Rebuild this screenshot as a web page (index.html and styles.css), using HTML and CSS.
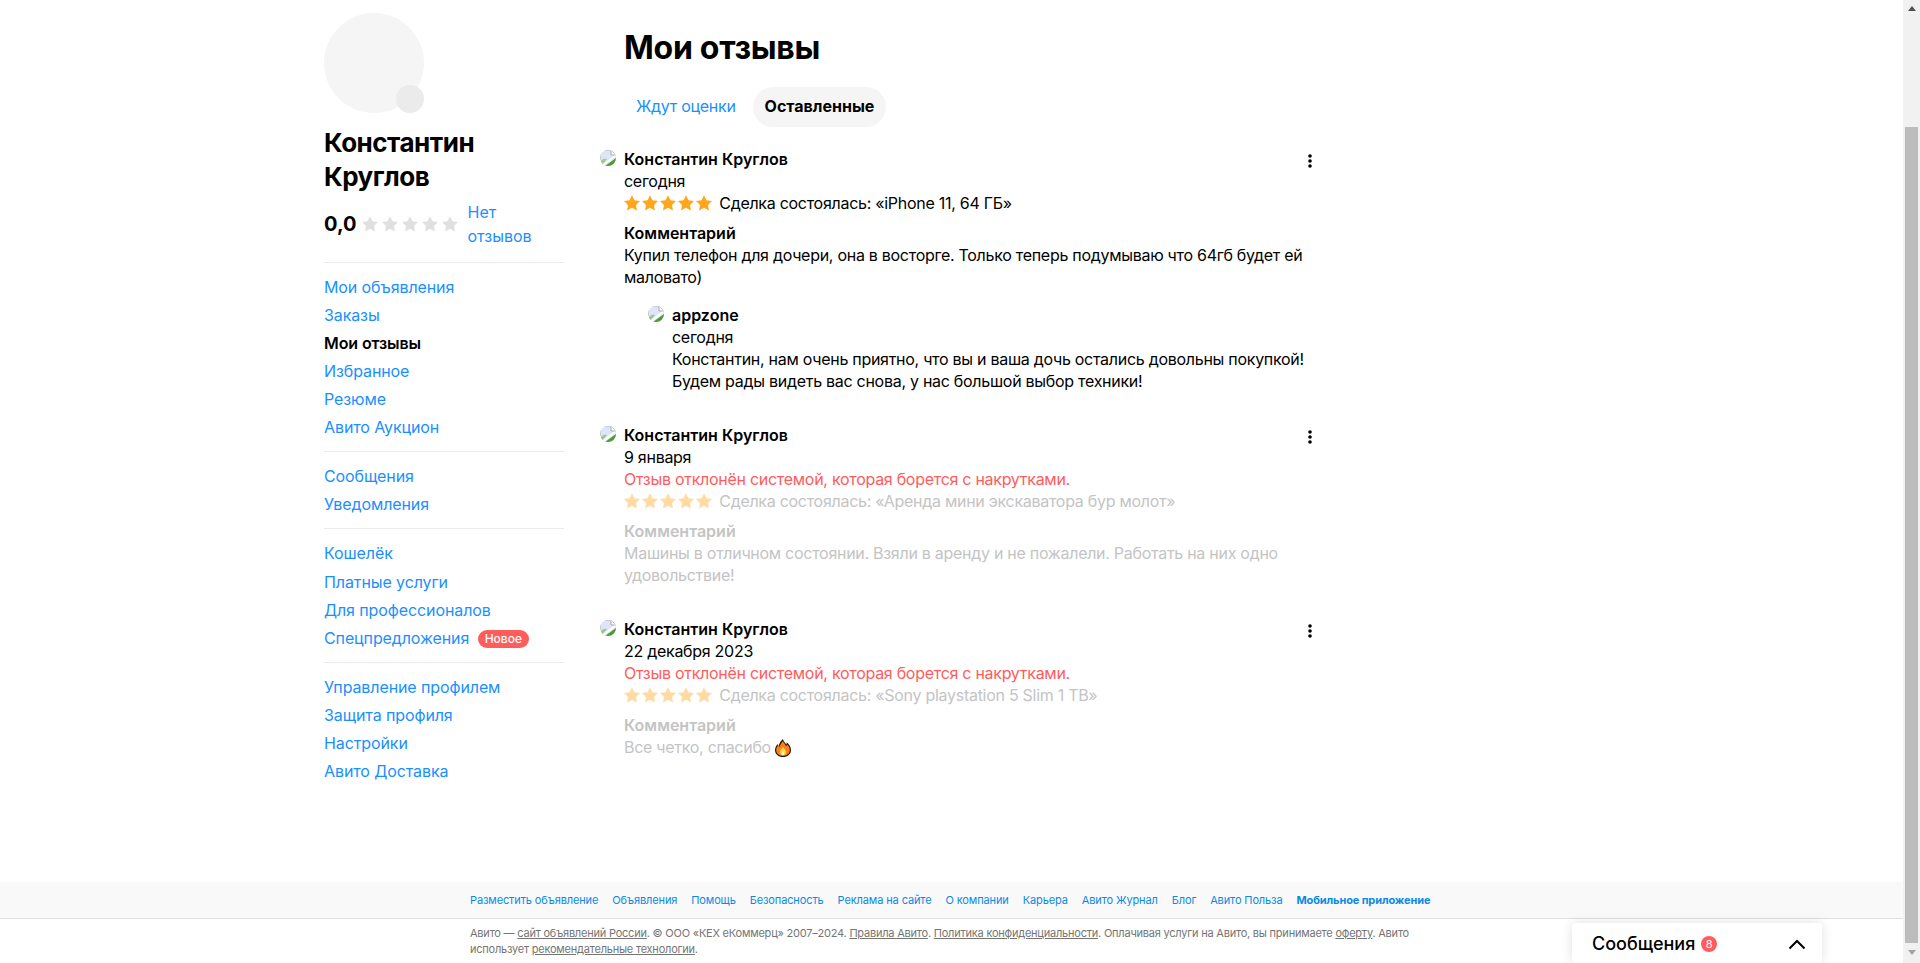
FILE: index.html
```html
<!DOCTYPE html>
<html lang="ru">

<head>
  <meta charset="UTF-8">
  <title>Мои отзывы</title>
  <link rel="stylesheet" href="styles.css">
</head>

<body>
  <svg class="defs" width="0" height="0">
    <symbol id="star" viewBox="0 0 16 16">
      <path d="M8 .2l2.45 5 5.55.8-4 3.900.95 5.500L8 12.800l-4.950 2.600L4 9.900 0 6l5.550-.8z" />
    </symbol>
    <symbol id="broken" viewBox="0 0 16 16">
      <path d="M0 0h11l5 5v11H0z" fill="#dce6f8" />
      <path d="M11 0v5h5z" fill="#fff" stroke="#a9a9a9" />
      <path d="M0 0h11M0 0v10" stroke="#a9a9a9" />
      <path d="M0 12c2-3 5-4 7-3l-6 7H0z" fill="#9ccb7c" />
      <path d="M16 8v8H5z" fill="#4f9a34" />
      <path d="M2 16L15 6" stroke="#fff" stroke-width="2" />
    </symbol>
    <symbol id="more" viewBox="0 0 4 16">
      <circle cx="2" cy="3" r="1.800" />
      <circle cx="2" cy="8" r="1.800" />
      <circle cx="2" cy="13" r="1.800" />
    </symbol>
  </svg>

  <div class="page">
    <div class="content">
      <div class="layout">
        <aside class="sidebar">
          <div class="avatar">
            <span class="avatar-edit"></span>
          </div>
          <div class="profile-name">Константин Круглов</div>
          <div class="rating">
            <b class="rating-value">0,0</b>
            <span class="stars stars-empty">
              <svg><use href="#star" /></svg><svg><use href="#star" /></svg><svg><use href="#star" /></svg><svg><use href="#star" /></svg><svg><use href="#star" /></svg>
            </span>
            <a class="rating-link" href="#">Нет отзывов</a>
          </div>

          <nav class="menu">
            <a href="#">Мои объявления</a>
            <a href="#">Заказы</a>
            <a href="#" class="current">Мои отзывы</a>
            <a href="#">Избранное</a>
            <a href="#">Резюме</a>
            <a href="#">Авито Аукцион</a>
          </nav>
          <nav class="menu">
            <a href="#">Сообщения</a>
            <a href="#">Уведомления</a>
          </nav>
          <nav class="menu menu-wallet">
            <a href="#">Кошелёк</a>
            <a href="#">Платные услуги</a>
            <a href="#">Для профессионалов</a>
            <a href="#">Спецпредложения <span class="badge-new">Новое</span></a>
          </nav>
          <nav class="menu">
            <a href="#">Управление профилем</a>
            <a href="#">Защита профиля</a>
            <a href="#">Настройки</a>
            <a href="#">Авито Доставка</a>
          </nav>
        </aside>

        <main class="main">
          <h1>Мои отзывы</h1>
          <div class="tabs">
            <a href="#" class="tab">Ждут оценки</a>
            <a href="#" class="tab tab-active">Оставленные</a>
          </div>

          <article class="review">
            <svg class="review-pic"><use href="#broken" /></svg>
            <svg class="review-more"><use href="#more" /></svg>
            <div class="review-name">Константин Круглов</div>
            <div>сегодня</div>
            <div class="deal">
              <span class="stars stars-full">
                <svg><use href="#star" /></svg><svg><use href="#star" /></svg><svg><use href="#star" /></svg><svg><use href="#star" /></svg><svg><use href="#star" /></svg>
              </span>
              Сделка состоялась: «iPhone 11, 64 ГБ»
            </div>
            <div class="review-title">Комментарий</div>
            <div>Купил телефон для дочери, она в восторге. Только теперь подумываю что 64гб будет ей маловато)</div>
            <div class="answer">
              <svg class="review-pic"><use href="#broken" /></svg>
              <div class="review-name">appzone</div>
              <div>сегодня</div>
              <div>Константин, нам очень приятно, что вы и ваша дочь остались довольны покупкой! Будем рады видеть вас снова, у нас большой выбор техники!</div>
            </div>
          </article>

          <article class="review review-rejected">
            <svg class="review-pic"><use href="#broken" /></svg>
            <svg class="review-more"><use href="#more" /></svg>
            <div class="review-name">Константин Круглов</div>
            <div>9 января</div>
            <div class="reject-note">Отзыв отклонён системой, которая борется с накрутками.</div>
            <div class="deal">
              <span class="stars stars-full">
                <svg><use href="#star" /></svg><svg><use href="#star" /></svg><svg><use href="#star" /></svg><svg><use href="#star" /></svg><svg><use href="#star" /></svg>
              </span>
              Сделка состоялась: «Аренда мини экскаватора бур молот»
            </div>
            <div class="review-title">Комментарий</div>
            <div class="faded">Машины в отличном состоянии. Взяли в аренду и не пожалели. Работать на них одно удовольствие!</div>
          </article>

          <article class="review review-rejected">
            <svg class="review-pic"><use href="#broken" /></svg>
            <svg class="review-more"><use href="#more" /></svg>
            <div class="review-name">Константин Круглов</div>
            <div>22 декабря 2023</div>
            <div class="reject-note">Отзыв отклонён системой, которая борется с накрутками.</div>
            <div class="deal">
              <span class="stars stars-full">
                <svg><use href="#star" /></svg><svg><use href="#star" /></svg><svg><use href="#star" /></svg><svg><use href="#star" /></svg><svg><use href="#star" /></svg>
              </span>
              Сделка состоялась: «Sony playstation 5 Slim 1 TB»
            </div>
            <div class="review-title">Комментарий</div>
            <div class="faded">Все четко, спасибо
              <svg class="fire" viewBox="0 0 16 18">
                <path d="M8 0c.5 2.800 2.300 3.600 3.200 5.600.5-.8.6-1.500.5-2.300C14 5.200 16 8 16 11c0 4.300-3.400 7-8 7s-8-2.700-8-7c0-2.700 1.500-4.500 2.500-6 .2 1 .6 1.700 1.300 2.200C3.800 4.500 6 2 8 0z" fill="#2b1708" />
                <path d="M8 2c.6 2.300 2.300 3.300 3.300 5.300l.9-1.700C13.800 7 14.800 9 14.800 11c0 3.600-3 5.800-6.800 5.800S1.200 14.600 1.200 11c0-2.200 1-3.500 1.800-4.600.3.700.8 1.100 1.600 1.400C4.800 6 6.500 3.800 8 2z" fill="#f5801c" />
                <path d="M8 8c.6 1.500 3 2.500 3 5 0 2-1.300 3.300-3 3.300S5 15 5 13c0-2.200 2-3.300 3-5z" fill="#ffd84a" />
                <path d="M8 12.500c.4.800 1.300 1.300 1.300 2.300 0 .9-.6 1.500-1.300 1.500s-1.300-.6-1.300-1.500c0-1 .9-1.500 1.300-2.300z" fill="#fff6c8" />
              </svg>
            </div>
          </article>
        </main>
      </div>

      <footer class="footer">
        <div class="footer-links">
          <a href="#">Разместить объявление</a>
          <a href="#">Объявления</a>
          <a href="#">Помощь</a>
          <a href="#">Безопасность</a>
          <a href="#">Реклама на сайте</a>
          <a href="#">О компании</a>
          <a href="#">Карьера</a>
          <a href="#">Авито Журнал</a>
          <a href="#">Блог</a>
          <a href="#">Авито Польза</a>
          <a href="#" class="footer-app">Мобильное приложение</a>
        </div>
        <p class="footer-note">
          Авито — <a href="#">сайт объявлений России</a>. © ООО «КЕХ eКоммерц» 2007–2024. <a href="#">Правила Авито</a>. <a href="#">Политика конфиденциальности</a>. Оплачивая услуги на Авито, вы принимаете <a href="#">оферту</a>. Авито использует <a href="#">рекомендательные технологии</a>.
        </p>
      </footer>

      <div class="messenger">
        <span class="messenger-title">Сообщения</span>
        <span class="messenger-count">8</span>
        <svg class="messenger-arrow" viewBox="0 0 18 11">
          <path d="M1.500 9.500L9 2l7.500 7.500" fill="none" stroke="#000" stroke-width="2" />
        </svg>
      </div>
    </div>

    <div class="scrollbar">
      <span class="scroll-arrow scroll-up"></span>
      <span class="scroll-thumb"></span>
      <span class="scroll-arrow scroll-down"></span>
    </div>
  </div>
</body>

</html>
```

FILE: styles.css
```css
:root {
  --link: #1a8fff;
  --faded: #c4c4c4;
  --red: #ff5c5c;
  --line: #ebebeb;
}

* {
  box-sizing: border-box;
}

html,
body {
  margin: 0;
  height: 100%;
  overflow: hidden;
}

body {
  font-family: Inter, "Noto Sans", sans-serif;
  font-size: 16px;
  line-height: 22px;
  color: #000;
  background-color: #fff;
}

a {
  color: var(--link);
  text-decoration: none;
}

.defs {
  display: block;
  height: 0;
}

.page {
  display: flex;
  height: 963px;
}

.content {
  position: relative;
  display: flex;
  flex-direction: column;
  flex: 1;
  min-width: 0;
}

.layout {
  display: flex;
  flex: 1;
  padding-left: 324px;
}

/* левая колонка */
.sidebar {
  width: 240px;
  padding-top: 13px;
  margin-right: 60px;
}

.avatar {
  position: relative;
  width: 100px;
  height: 100px;
  border-radius: 50%;
  background-color: #f5f5f5;
}

.avatar-edit {
  position: absolute;
  right: 0;
  bottom: 0;
  width: 28px;
  height: 28px;
  border-radius: 50%;
  background-color: #ebebeb;
}

.profile-name {
  margin-top: 13px;
  font-size: 26px;
  font-weight: 700;
  line-height: 34px;
  letter-spacing: -.5px;
}

.rating {
  display: flex;
  align-items: center;
  margin-top: 6px;
  padding-bottom: 14px;
  line-height: 24px;
}

.rating-value {
  font-size: 20px;
  font-weight: 700;
  margin-right: 6px;
}

.rating-link {
  width: 80px;
  margin-left: 9px;
}

.stars {
  display: inline-flex;
  gap: 2px;
  vertical-align: -2px;
}

.stars svg {
  width: 16px;
  height: 16px;
}

.stars-empty {
  gap: 4px;
  fill: #e0e0e0;
}

.stars-full {
  fill: #ffa61a;
  margin-right: 3px;
}

.menu {
  display: flex;
  flex-direction: column;
  align-items: flex-start;
  padding: 10px 0;
  border-top: 1px solid var(--line);
  line-height: 28px;
  letter-spacing: -.1px;
}

.menu-wallet a:first-child {
  margin-bottom: 1px;
}

.menu .current {
  color: #000;
  font-weight: 600;
}

.badge-new {
  display: inline-block;
  margin-left: 4px;
  padding: 0 7px;
  border-radius: 9px;
  font-size: 12px;
  font-weight: 500;
  line-height: 18px;
  vertical-align: 1px;
  letter-spacing: 0;
  color: #fff;
  background-color: var(--red);
}

/* отзывы */
.main {
  width: 692px;
  padding-top: 28px;
  letter-spacing: -.28px;
}

h1 {
  margin: 0;
  font-size: 32px;
  font-weight: 700;
  line-height: 40px;
}

.tabs {
  display: flex;
  gap: 5px;
  margin-top: 19px;
}

.tab {
  height: 40px;
  padding: 0 12px;
  border-radius: 20px;
  line-height: 38px;
}

.tab-active {
  font-weight: 700;
  letter-spacing: 0;
  color: #000;
  background-color: #f5f5f5;
}

.review {
  position: relative;
  margin-top: 32px;
}

.tabs + .review {
  margin-top: 21px;
}

.review-pic {
  position: absolute;
  left: -24px;
  top: 2px;
  width: 16px;
  height: 16px;
  border-radius: 50%;
}

.review-more {
  position: absolute;
  right: 4px;
  top: 5px;
  width: 4px;
  height: 16px;
}

.review-name,
.review-title {
  font-weight: 600;
  letter-spacing: 0;
}

.review-title {
  margin-top: 8px;
}

.answer {
  position: relative;
  margin: 16px 0 0 48px;
}

.reject-note {
  color: var(--red);
}

.review-rejected .deal,
.review-rejected .review-title,
.review-rejected .faded {
  color: var(--faded);
}

.review-rejected .stars-full {
  fill: #ffdba3;
}

.fire {
  width: 16px;
  height: 18px;
  vertical-align: -4px;
}

/* подвал */
.footer {
  font-size: 11px;
}

.footer-links {
  display: flex;
  gap: 14px;
  height: 37px;
  padding-left: 470px;
  line-height: 36px;
  letter-spacing: -.12px;
  background-color: #f9f9f9;
  border-bottom: 1px solid #e0e0e0;
}

.footer-links a {
  color: #0a8ae6;
}

.footer-links .footer-app {
  font-weight: 700;
}

.footer-note {
  width: 970px;
  margin: 0 0 0 470px;
  padding: 6px 0;
  line-height: 16px;
  letter-spacing: -.22px;
  color: #757575;
}

.footer-note a {
  color: #757575;
  text-decoration: underline;
}

/* виджет сообщений поверх страницы */
.messenger {
  position: absolute;
  right: 81px;
  bottom: 0;
  display: flex;
  align-items: center;
  width: 250px;
  height: 40px;
  padding: 2px 20px 0;
  border-radius: 4px;
  background-color: #fff;
  box-shadow: 0 0 12px rgba(0, 0, 0, .12);
}

.messenger-title {
  font-size: 18px;
  font-weight: 500;
}

.messenger-count {
  width: 16px;
  height: 16px;
  margin-left: 6px;
  border-radius: 50%;
  font-size: 11px;
  line-height: 16px;
  text-align: center;
  color: #fff;
  background-color: var(--red);
}

.messenger-arrow {
  width: 18px;
  height: 11px;
  margin-left: auto;
  margin-right: -4px;
}

/* полоса прокрутки */
.scrollbar {
  display: flex;
  flex-direction: column;
  align-items: center;
  width: 17px;
  background-color: #f1f1f1;
}

.scroll-arrow {
  width: 0;
  height: 0;
  border-left: 4px solid transparent;
  border-right: 4px solid transparent;
}

.scroll-up {
  margin-top: 6px;
  border-bottom: 5px solid #505050;
}

.scroll-thumb {
  width: 13px;
  height: 816px;
  margin-top: 116px;
  background-color: #bcbcbc;
}

.scroll-down {
  margin-top: 7px;
  border-top: 5px solid #a3a3a3;
}
```
